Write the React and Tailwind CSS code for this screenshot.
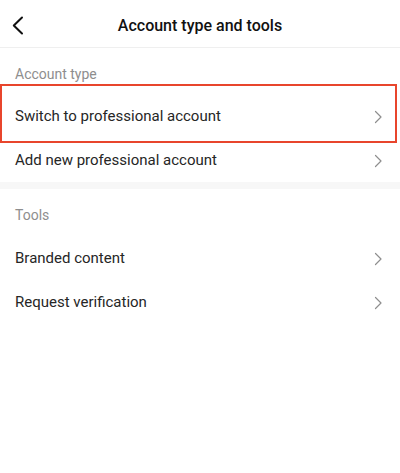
import React from 'react';

const font = { fontFamily: 'Roboto, "Noto Sans", sans-serif' };

function Chevron() {
  return (
    <svg width="9" height="14" viewBox="0 0 9 14" fill="none" className="shrink-0">
      <path d="M1.5 1.5L7 7L1.5 12.5" stroke="#8e8e8e" strokeWidth="1.2" strokeLinecap="round" strokeLinejoin="round" />
    </svg>
  );
}

function Row({ label }) {
  return (
    <div className="h-[44px] flex items-center justify-between pl-[15px] pr-[17px] pt-[1px]">
      <span className="text-[15px] text-[#262626]">{label}</span>
      <Chevron />
    </div>
  );
}

function SectionLabel({ children, className }) {
  return (
    <div className={`flex items-center px-[15px] text-[14px] text-[#8e8e8e] ${className}`}>{children}</div>
  );
}

export default function App() {
  return (
    <div className="w-[400px] h-[473px] bg-white" style={font}>
      {/* Header */}
      <div className="h-[48px] relative flex items-center justify-center border-b border-[#efefef]">
        <svg width="12" height="20" viewBox="0 0 12 20" fill="none" className="absolute left-[12px] top-[16px]">
          <path d="M10 1.5L1.8 9.5L10 17.5" stroke="#111" strokeWidth="2" strokeLinecap="round" strokeLinejoin="round" />
        </svg>
        <h1 className="text-[16px] font-medium text-[#111] pt-[5px]">Account type and tools</h1>
      </div>

      <SectionLabel className="h-[46px] pt-[6px]">Account type</SectionLabel>
      <div className="relative">
        <Row label="Switch to professional account" />
        {/* highlight annotation */}
        <div className="absolute left-0 right-[3px] -top-[10px] -bottom-[5px] border-2 border-[#e8452c] pointer-events-none" />
      </div>
      <Row label="Add new professional account" />

      <div className="h-[7px] bg-[#f7f7f7]" />

      <SectionLabel className="h-[47px] pt-[5px]">Tools</SectionLabel>
      <Row label="Branded content" />
      <Row label="Request verification" />
    </div>
  );
}
